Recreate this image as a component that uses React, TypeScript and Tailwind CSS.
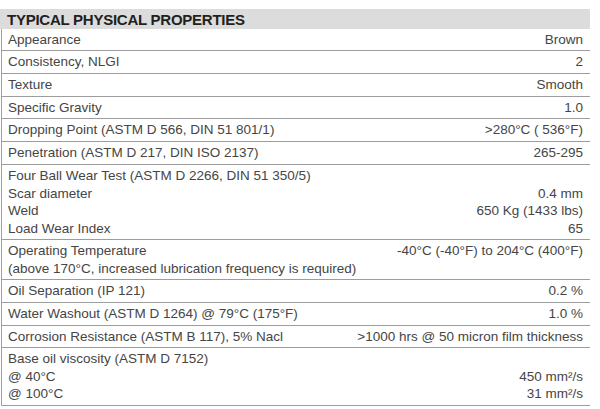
import React from "react";

type Row = { h: number; lines: [string, string][] };

const rows: Row[] = [
  { h: 22, lines: [["Appearance", "Brown"]] },
  { h: 23, lines: [["Consistency, NLGI", "2"]] },
  { h: 23, lines: [["Texture", "Smooth"]] },
  { h: 22, lines: [["Specific Gravity", "1.0"]] },
  { h: 23, lines: [["Dropping Point (ASTM D 566, DIN 51 801/1)", ">280°C ( 536°F)"]] },
  { h: 23, lines: [["Penetration (ASTM D 217, DIN ISO 2137)", "265-295"]] },
  {
    h: 75,
    lines: [
      ["Four Ball Wear Test (ASTM D 2266, DIN 51 350/5)", ""],
      ["Scar diameter", "0.4 mm"],
      ["Weld", "650 Kg (1433 lbs)"],
      ["Load Wear Index", "65"],
    ],
  },
  {
    h: 40,
    lines: [
      ["Operating Temperature", "-40°C (-40°F) to 204°C (400°F)"],
      ["(above 170°C, increased lubrication frequency is required)", ""],
    ],
  },
  { h: 23, lines: [["Oil Separation (IP 121)", "0.2 %"]] },
  { h: 23, lines: [["Water Washout (ASTM D 1264) @ 79°C (175°F)", "1.0 %"]] },
  { h: 22, lines: [["Corrosion Resistance (ASTM B 117), 5% Nacl", ">1000 hrs @ 50 micron film thickness"]] },
  {
    h: 58,
    lines: [
      ["Base oil viscosity (ASTM D 7152)", ""],
      ["@ 40°C", "450 mm²/s"],
      ["@ 100°C", "31 mm²/s"],
    ],
  },
];

export default function App() {
  return (
    <div className="w-[600px] h-[409px] bg-white pt-[9px]" style={{ fontFamily: '"Liberation Sans", Arial, sans-serif' }}>
      <div className="w-[590px]">
        <div className="h-[20px] bg-[#dcdcdd] flex items-center pl-[7px]">
          <span className="text-[15px] font-bold tracking-[-0.25px] text-[#231f20] leading-none">TYPICAL PHYSICAL PROPERTIES</span>
        </div>
        <div className="border-l-[1.5px] border-[#a0a0a0] ml-[1px]">
          {rows.map((r, i) => (
            <div
              key={i}
              className="border-b border-[#9d9d9d] flex flex-col justify-center pl-[6px] pr-[7px] text-[13.5px] leading-[17.5px] text-[#454545]"
              style={{ height: r.h }}
            >
              {r.lines.map(([l, v], j) => (
                <div key={j} className="flex justify-between whitespace-nowrap">
                  <span>{l}</span>
                  <span>{v}</span>
                </div>
              ))}
            </div>
          ))}
        </div>
      </div>
    </div>
  );
}
